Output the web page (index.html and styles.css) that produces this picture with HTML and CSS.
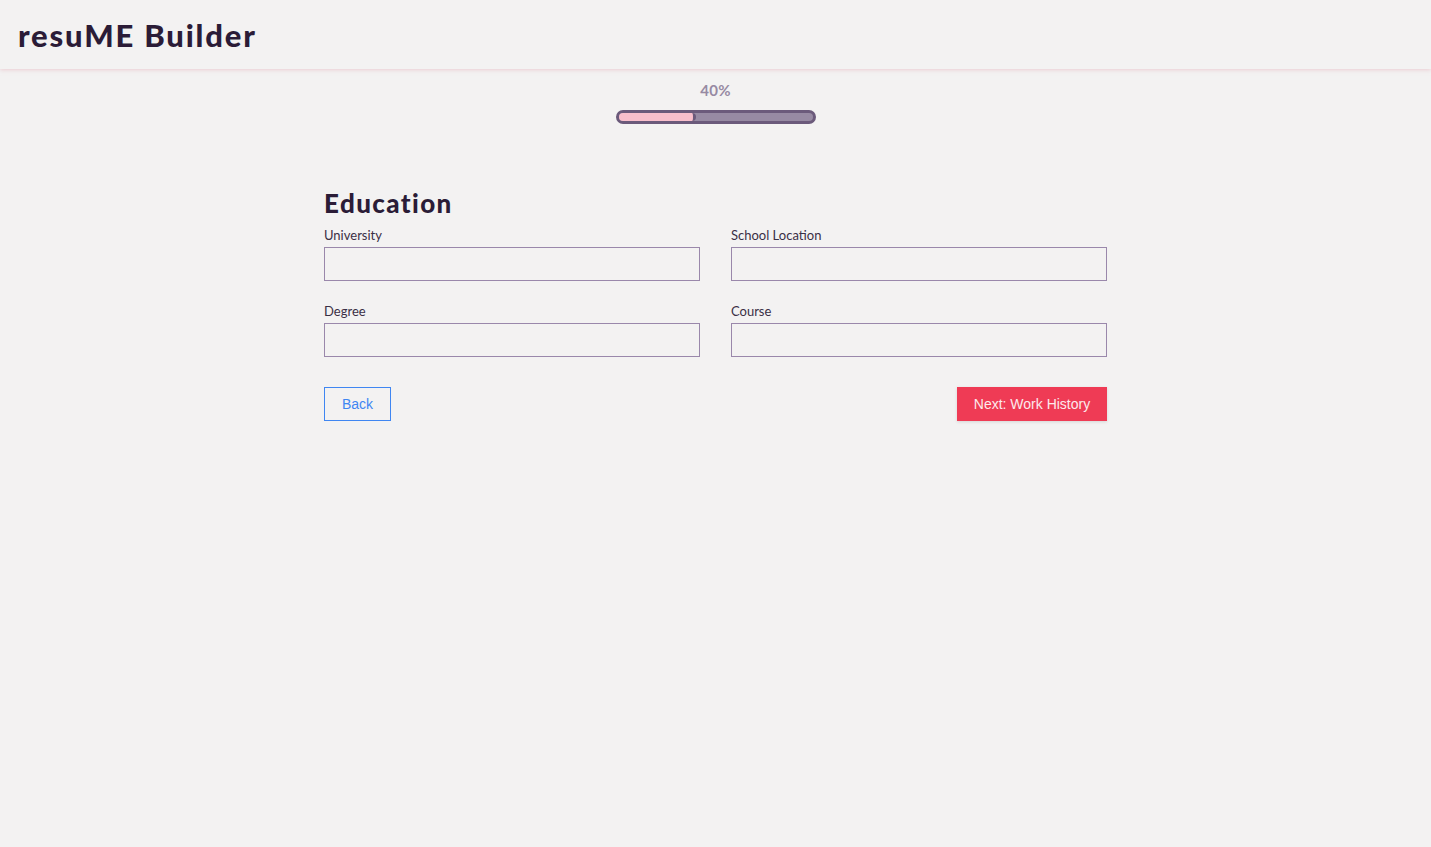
FILE: index.html
```html
<!DOCTYPE html>
<html lang="en">
<head>
<meta charset="utf-8">
<title>resuME Builder</title>
<link rel="stylesheet" href="styles.css">
</head>
<body>
<header class="topbar">
  <h1 class="brand">resuME Builder</h1>
</header>
<main class="page">
  <section class="progress">
    <div class="progress-label">40%</div>
    <div class="progress-track"><div class="progress-fill" style="width:40%"></div></div>
  </section>
  <form class="form">
    <h2 class="form-title">Education</h2>
    <div class="grid">
      <label class="field"><span class="field-label">University</span><input class="field-input" type="text"></label>
      <label class="field"><span class="field-label">School Location</span><input class="field-input" type="text"></label>
      <label class="field"><span class="field-label">Degree</span><input class="field-input" type="text"></label>
      <label class="field"><span class="field-label">Course</span><input class="field-input" type="text"></label>
    </div>
    <div class="actions">
      <button type="button" class="btn btn-back">Back</button>
      <button type="button" class="btn btn-next">Next: Work History</button>
    </div>
  </form>
</main>
</body>
</html>
```
FILE: styles.css
```css
* { box-sizing: border-box; }
html, body { margin: 0; padding: 0; }
body {
  background: #f3f2f2;
  font-family: "Lato", "Open Sans", sans-serif;
  color: #2b1c37;
  min-height: 847px;
}
.topbar {
  height: 69px;
  display: flex;
  align-items: center;
  padding-left: 18px;
  background: #f3f2f2;
  box-shadow: 0 1px 4px rgba(230, 180, 190, 0.6);
}
.brand {
  margin: 0;
  font-size: 31px;
  font-weight: 900;
  color: #2b1c37;
  letter-spacing: 1.8px;
  line-height: 1;
  padding-top: 1px;
}
.page {
  display: flex;
  flex-direction: column;
  align-items: center;
}
.progress {
  margin-top: 12px;
  display: flex;
  flex-direction: column;
  align-items: center;
}
.progress-label {
  font-size: 15px;
  font-weight: 700;
  color: #978aa3;
  line-height: 18px;
  letter-spacing: 0.3px;
}
.progress-track {
  margin-top: 11px;
  width: 200px;
  height: 14px;
  border: 3px solid #6b5a7b;
  border-radius: 8px;
  background: #978aa3;
  overflow: hidden;
}
.progress-fill {
  height: 100%;
  background: #f8bfcc;
  border-right: 3px solid #6b5a7b;
  border-radius: 0 6px 6px 0;
}
.form {
  width: 783px;
  margin-top: 64px;
}
.form-title {
  margin: 0;
  font-size: 26px;
  font-weight: 900;
  line-height: 30px;
  letter-spacing: 1.4px;
  color: #2b1c37;
}
.grid {
  margin-top: 9px;
  display: grid;
  grid-template-columns: 376px 376px;
  column-gap: 31px;
  row-gap: 22px;
}
.field {
  display: flex;
  flex-direction: column;
}
.field-label {
  font-size: 13px;
  color: #3a2f45;
  line-height: 16px;
  margin-bottom: 4px;
}
.field-input {
  height: 34px;
  border: 1px solid #9a88ab;
  background: #f3f2f2;
  border-radius: 0;
  margin: 0;
  padding: 0 8px;
  font: inherit;
}
.actions {
  margin-top: 30px;
  display: flex;
  justify-content: space-between;
}
.btn {
  height: 34px;
  font-family: "Liberation Sans", Arial, sans-serif;
  font-size: 14px;
  border-radius: 0;
  cursor: pointer;
  margin: 0;
}
.btn-back {
  width: 67px;
  background: transparent;
  border: 1px solid #3f86f2;
  color: #3f86f2;
}
.btn-next {
  width: 150px;
  background: #ef3b55;
  border: none;
  color: #fde9ec;
  box-shadow: 0 1px 3px rgba(0,0,0,0.12);
}
```
